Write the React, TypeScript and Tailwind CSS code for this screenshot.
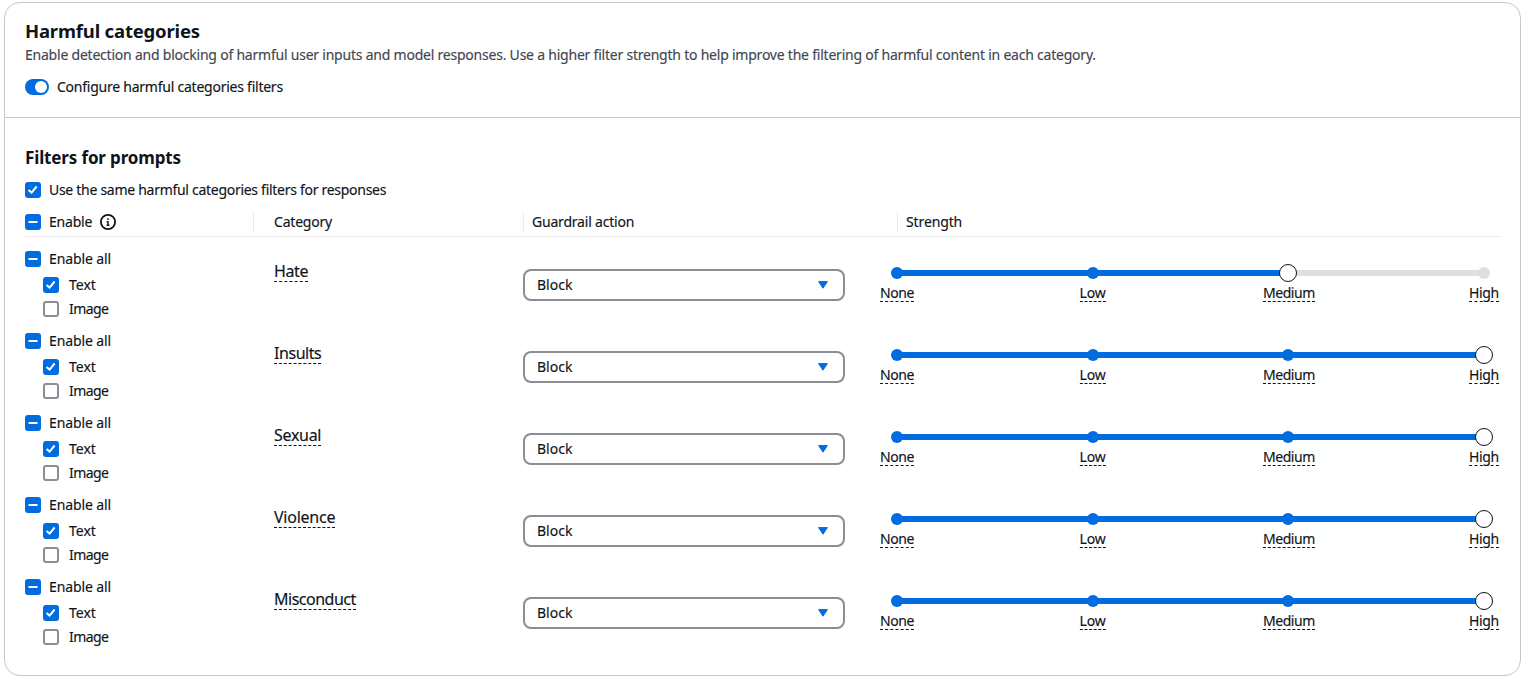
type CheckState = "checked" | "mixed" | "empty";

function Checkbox({ state }: { state: CheckState }) {
  if (state === "empty") {
    return <span className="block size-4 shrink-0 rounded-[3px] border-2 border-[#8c8c94] bg-white" />;
  }
  return (
    <span className="block size-4 shrink-0 rounded-[3px] bg-[#006ce0]">
      <svg viewBox="0 0 16 16" className="size-4" fill="none" stroke="#fff" strokeWidth="2">
        {state === "checked" ? <path d="M3.5 7.9l3.1 2.7 5-6.1" /> : <path d="M3.5 8h9" />}
      </svg>
    </span>
  );
}

type Row = { name: string; nameTracking: string; level: number };

const rows: Row[] = [
  { name: "Hate", nameTracking: "tracking-[-0.4px]", level: 2 },
  { name: "Insults", nameTracking: "tracking-[-0.45px]", level: 3 },
  { name: "Sexual", nameTracking: "tracking-[-0.3px]", level: 3 },
  { name: "Violence", nameTracking: "tracking-[-0.25px]", level: 3 },
  { name: "Misconduct", nameTracking: "tracking-[-0.5px]", level: 3 },
];

const levels = [
  { label: "None", tracking: "tracking-[-0.4px]" },
  { label: "Low", tracking: "tracking-[-0.1px]" },
  { label: "Medium", tracking: "tracking-[-0.42px]" },
  { label: "High", tracking: "tracking-[-0.35px]" },
];

function StrengthSlider({ level }: { level: number }) {
  return (
    <div className="w-[587px] pt-[15px]">
      <div className="relative h-[18px]">
        <div className="absolute inset-x-0 top-[6px] h-[6px] bg-[#dedee3]" />
        <div
          className="absolute left-0 top-[6px] h-[6px] bg-[#006ce0]"
          style={{ width: `${(level / 3) * 100}%` }}
        />
        {levels.map((l, i) => (
          <span
            key={l.label}
            className={`absolute top-[3px] size-3 -translate-x-1/2 rounded-full ${i <= level ? "bg-[#006ce0]" : "bg-[#dedee3]"}`}
            style={{ left: `${(i / 3) * 100}%` }}
          />
        ))}
        <span
          className="absolute top-0 size-[18px] -translate-x-1/2 rounded-full border border-[#0f141a] bg-white"
          style={{ left: `${(level / 3) * 100}%` }}
        />
      </div>
      <div className="relative mt-[2px] h-[20px]">
        {levels.map((l, i) => (
          <span
            key={l.label}
            className={`absolute top-0 h-[18px] -translate-x-1/2 border-b border-dashed border-[#0f141a] leading-[18px] ${l.tracking}`}
            style={{ left: `calc(${(i / 3) * 100}% + ${i === 2 ? 0.6 : 0}px)` }}
          >
            {l.label}
          </span>
        ))}
      </div>
    </div>
  );
}

function FilterRow({ row }: { row: Row }) {
  return (
    <div className="flex h-[82px]">
      <div className="w-[249px] shrink-0">
        <div className="flex h-5 items-center gap-2">
          <Checkbox state="mixed" />
          <span className="tracking-[-0.12px]">Enable all</span>
        </div>
        <div className="mt-[6px] flex h-5 items-center gap-[10px] pl-[18px]">
          <Checkbox state="checked" />
          <span>Text</span>
        </div>
        <div className="mt-1 flex h-5 items-center gap-[10px] pl-[18px]">
          <Checkbox state="empty" />
          <span className="tracking-[-0.55px]">Image</span>
        </div>
      </div>
      <div className="w-[249px] shrink-0 pt-[12px]">
        <span
          className={`inline-block h-[21px] border-b border-dashed border-[#0f141a] text-[16px] leading-[20px] ${row.nameTracking}`}
        >
          {row.name}
        </span>
      </div>
      <div className="w-[374px] shrink-0 pt-5">
        <div className="flex h-8 w-[322px] items-center justify-between rounded-lg border-2 border-[#8c8c94] bg-white pl-3 pr-[15px]">
          <span>Block</span>
          <svg viewBox="0 0 10 8" className="h-2 w-[10px]" fill="#006ce0" stroke="#006ce0" strokeLinejoin="round">
            <path d="M.6.6h8.8L5 7.2z" />
          </svg>
        </div>
      </div>
      <StrengthSlider level={row.level} />
    </div>
  );
}

export default function App() {
  return (
    <div className="h-[679px] bg-white pl-1 pr-[2px] pt-[2px] font-['Noto_Sans',sans-serif] text-[14px] leading-5 text-[#0f141a] [-webkit-text-stroke:0.15px]">
      <section className="h-[674px] rounded-2xl border border-[#c6c6cd]">
        <header className="h-[115px] border-b border-[#c6c6cd] px-5 pt-4">
          <h2 className="h-[26px] text-[18.5px] font-bold leading-6 tracking-[-0.18px] [-webkit-text-stroke:0px]">
            Harmful categories
          </h2>
          <p className="h-5 whitespace-nowrap tracking-[-0.222px] text-[#424650]">
            Enable detection and blocking of harmful user inputs and model responses. Use a higher filter strength to
            help improve the filtering of harmful content in each category.
          </p>
          <div className="mt-3 flex h-5 items-center gap-2">
            <span className="flex h-4 w-6 items-center justify-end rounded-full bg-[#006ce0] pr-[2px]">
              <span className="size-3 rounded-full bg-white" />
            </span>
            <span className="tracking-[-0.24px]">Configure harmful categories filters</span>
          </div>
        </header>

        <div className="px-5 pt-[29px]">
          <h3 className="h-[22px] text-[17px] font-bold leading-[22px] tracking-[-0.14px] [-webkit-text-stroke:0px]">
            Filters for prompts
          </h3>
          <div className="mt-[11px] flex h-5 items-center gap-2">
            <Checkbox state="checked" />
            <span className="tracking-[-0.285px]">Use the same harmful categories filters for responses</span>
          </div>

          <div className="mt-3 flex h-[25px] w-[1475px] border-b border-[#ebebf0]">
            <div className="flex h-5 w-[228px] shrink-0 items-center gap-2">
              <Checkbox state="mixed" />
              <span className="tracking-[-0.2px]">Enable</span>
              <svg viewBox="0 0 16 16" className="size-4" fill="none" stroke="#0f141a" strokeWidth="1.8">
                <circle cx="8" cy="8" r="7.1" />
                <path d="M6.6 7.6H8V11M8 4.2v1.8M6.6 11.2h2.8" strokeWidth="1.4" />
              </svg>
            </div>
            <div className="h-5 w-[270px] shrink-0 border-l border-[#ebebf0] pl-5 tracking-[-0.2px]">Category</div>
            <div className="h-5 w-[374px] shrink-0 border-l border-[#ebebf0] pl-2 tracking-[-0.2px]">
              Guardrail action
            </div>
            <div className="h-5 border-l border-[#ebebf0] pl-2 tracking-[-0.12px]">Strength</div>
          </div>

          <div className="pt-3">
            {rows.map((row) => (
              <FilterRow key={row.name} row={row} />
            ))}
          </div>
        </div>
      </section>
    </div>
  );
}
